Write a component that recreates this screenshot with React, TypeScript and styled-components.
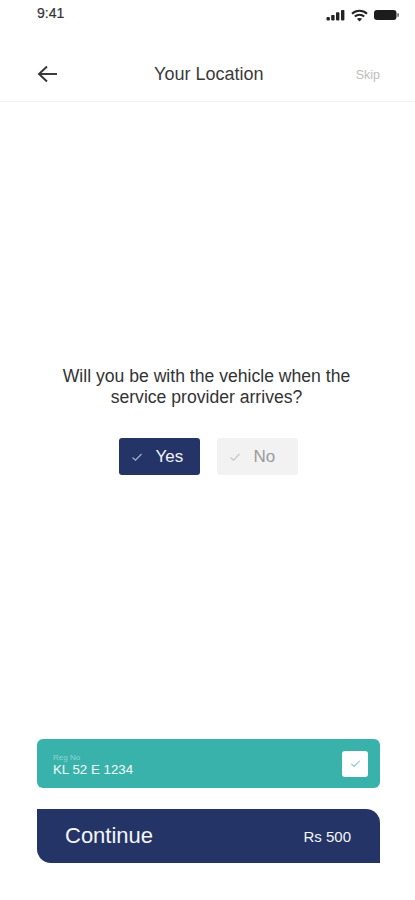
import React from 'react'
import styled, { createGlobalStyle } from 'styled-components'

const GlobalStyle = createGlobalStyle`
  html, body {
    margin: 0;
    padding: 0;
    background: #fff;
    font-family: 'Liberation Sans', Arial, sans-serif;
  }
`

const Check = ({ color, size = 12 }: { color: string; size?: number }) => (
  <svg width={size} height={size} viewBox="0 0 12 12" fill="none">
    <path d="M1.5 6.5 L4.5 9.2 L10.5 3" stroke={color} strokeWidth="1.1" />
  </svg>
)

const App: React.FC = () => {
  return (
    <Screen>
      <GlobalStyle />
      <StatusBar>
        <Clock>9:41</Clock>
        <StatusIcons>
          <svg width="19" height="12" viewBox="0 0 19 12" fill="#222">
            <rect x="0.5" y="8" width="3.4" height="3.4" rx="1" />
            <rect x="5.2" y="6" width="3.4" height="5.4" rx="0.8" />
            <rect x="10" y="3.2" width="3.4" height="8.2" rx="0.8" />
            <rect x="15" y="1" width="3.4" height="10.4" rx="0.8" />
          </svg>
          <svg width="17" height="13" viewBox="0 0 17 13" fill="none" stroke="#222" strokeWidth="2">
            <path d="M1 4.8 C5.2 0.8 11.8 0.8 16 4.8" />
            <path d="M3.8 7.6 C6.4 5.2 10.6 5.2 13.2 7.6" />
            <path d="M8.5 12.4 L5.9 9.8 C7.4 8.6 9.6 8.6 11.1 9.8 Z" fill="#222" stroke="none" />
          </svg>
          <svg width="25" height="12" viewBox="0 0 25 12" fill="#1c1c1c">
            <rect x="0" y="1" width="22.5" height="10" rx="3" />
            <rect x="23.2" y="4" width="1.8" height="4" rx="0.9" fill="#777" />
          </svg>
        </StatusIcons>
      </StatusBar>

      <NavBar>
        <BackButton aria-label="Back">
          <svg width="21" height="18" viewBox="0 0 21 18" fill="none" stroke="#333" strokeWidth="1.9">
            <path d="M20 9 H2" />
            <path d="M10 1.5 L2 9 L10 16.5" />
          </svg>
        </BackButton>
        <NavTitle>Your Location</NavTitle>
        <SkipLink>Skip</SkipLink>
      </NavBar>

      <Content>
        <Question>
          Will you be with the vehicle when the
          <br />
          service provider arrives?
        </Question>
        <Choices>
          <Choice $active>
            <Check color="#a9b4d0" />
            <span>Yes</span>
          </Choice>
          <Choice>
            <Check color="#c4c4c4" />
            <span>No</span>
          </Choice>
        </Choices>
      </Content>

      <Footer>
        <VehicleCard>
          <VehicleText>
            <VehicleLabel>Reg No</VehicleLabel>
            <VehicleNumber>KL 52 E 1234</VehicleNumber>
          </VehicleText>
          <CheckBox>
            <Check color="#7fc8c2" size={11} />
          </CheckBox>
        </VehicleCard>
        <ContinueButton>
          <ContinueLabel>Continue</ContinueLabel>
          <Price>Rs 500</Price>
        </ContinueButton>
      </Footer>
    </Screen>
  )
}

const Screen = styled.div`
  width: 415px;
  height: 900px;
  display: flex;
  flex-direction: column;
  overflow: hidden;
  background: #fff;
`

const StatusBar = styled.div`
  height: 26px;
  padding: 0 16px 0 37px;
  display: flex;
  align-items: center;
  justify-content: space-between;
`

const Clock = styled.span`
  font-size: 14px;
  color: #333;
  -webkit-text-stroke: 0.2px #333;
`

const StatusIcons = styled.div`
  display: flex;
  align-items: center;
  gap: 6px;
  margin-top: 4px;
`

const NavBar = styled.div`
  box-sizing: border-box;
  height: 76px;
  padding: 20px 35px 0 37px;
  display: flex;
  align-items: center;
  justify-content: space-between;
  border-bottom: 1px solid #f0f0f0;
`

const BackButton = styled.button`
  width: 21px;
  height: 18px;
  padding: 0;
  display: flex;
  background: none;
  border: none;
`

const NavTitle = styled.h1`
  margin: 1px 0 0 4px;
  font-size: 18px;
  font-weight: 400;
  color: #3a3a3a;
`

const SkipLink = styled.span`
  margin-top: 2px;
  font-size: 12.5px;
  color: #bdbdbd;
`

const Content = styled.main`
  flex: 1;
  display: flex;
  flex-direction: column;
  align-items: center;
  padding-top: 264px;
`

const Question = styled.p`
  margin: 0 2px 0 0;
  font-size: 17.6px;
  line-height: 21px;
  text-align: center;
  color: #333;
`

const Choices = styled.div`
  margin-top: 30px;
  margin-left: 1px;
  display: flex;
  gap: 17px;
`

const Choice = styled.button<{ $active?: boolean }>`
  width: 81px;
  height: 37px;
  padding: 0 0 0 12px;
  display: flex;
  align-items: center;
  gap: 13px;
  border: none;
  border-radius: 3px;
  font-family: inherit;
  font-size: 17px;
  background: ${(p) => (p.$active ? '#243466' : '#f2f2f2')};
  color: ${(p) => (p.$active ? '#f1f3f8' : '#9a9a9a')};
`

const Footer = styled.footer`
  padding: 0 35px 37px 37px;
  display: flex;
  flex-direction: column;
  gap: 21px;
`

const VehicleCard = styled.div`
  height: 49px;
  padding: 0 12px 0 16px;
  display: flex;
  align-items: center;
  justify-content: space-between;
  border-radius: 6px;
  background: #39b2ac;
`

const VehicleText = styled.div`
  display: flex;
  flex-direction: column;
  margin-top: 4px;
`

const VehicleLabel = styled.span`
  font-size: 8px;
  line-height: 9px;
  color: #8ed6d1;
`

const VehicleNumber = styled.span`
  font-size: 13.3px;
  line-height: 16px;
  color: #f4fbfa;
`

const CheckBox = styled.div`
  width: 26px;
  height: 26px;
  display: flex;
  align-items: center;
  justify-content: center;
  border-radius: 3px;
  background: #fff;
`

const ContinueButton = styled.button`
  height: 54px;
  padding: 0 29px 0 28px;
  display: flex;
  align-items: center;
  justify-content: space-between;
  border: none;
  border-radius: 0 14px 0 14px;
  font-family: inherit;
  background: #243466;
  color: #f4f5f9;
`

const ContinueLabel = styled.span`
  font-size: 22px;
`

const Price = styled.span`
  font-size: 15px;
`

export default App
